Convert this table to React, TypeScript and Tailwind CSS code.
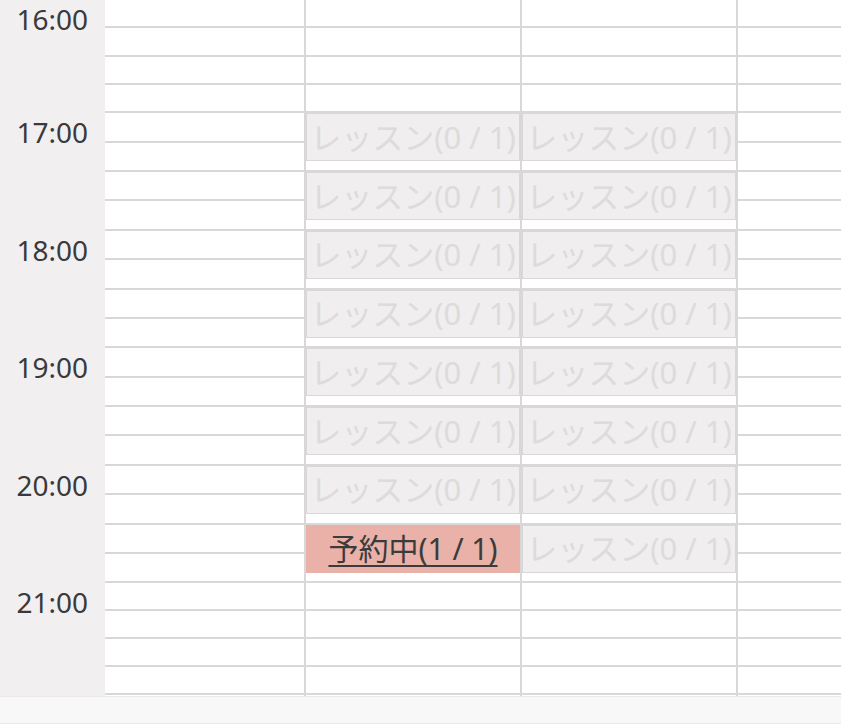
const FONT = { fontFamily: '"Noto Sans", "Noto Sans CJK JP", sans-serif' }

type Slot = { kind: 'lesson' | 'booked' }

const lessonCol: Slot[] = Array.from({ length: 8 }, () => ({ kind: 'lesson' as const }))
const bookedCol: Slot[] = [...lessonCol.slice(0, 7), { kind: 'booked' }]

const hours = [
  { label: '16:00', h: 'h-[113.33px]' },
  { label: '17:00', h: 'h-[117.5px]' },
  { label: '18:00', h: 'h-[117.5px]' },
  { label: '19:00', h: 'h-[117.5px]' },
  { label: '20:00', h: 'h-[117.5px]' },
  { label: '21:00', h: 'h-[112px]' },
]

function TopRows() {
  return (
    <>
      {[0, 1, 2, 3].map(i => (
        <div key={i} className="h-[28.33px] border-b-2 border-[#d9d7d8]" />
      ))}
    </>
  )
}

function BottomRows() {
  return (
    <>
      {[0, 1, 2, 3].map(i => (
        <div key={i} className="h-[28px] border-b-2 border-[#d9d7d8]" />
      ))}
    </>
  )
}

function MidRows() {
  return (
    <>
      {Array.from({ length: 16 }).map((_, i) => (
        <div key={i} className="h-[29.375px] border-b-2 border-[#d9d7d8]" />
      ))}
    </>
  )
}

function EventColumn({ slots }: { slots: Slot[] }) {
  return (
    <div className="w-[216px] flex flex-col border-l-2 border-[#d9d7d8]">
      <TopRows />
      {slots.map((s, i) => (
        <div key={i} className="h-[58.75px] border-b-2 border-[#d9d7d8] flex flex-col">
          {s.kind === 'lesson' ? (
            <div className="h-[48px] bg-[#f0eeef] border border-[#d9d7d8] flex items-center justify-center overflow-hidden whitespace-nowrap text-[31px] leading-none text-[#dddbdc]" style={FONT}>
              レッスン(0 / 1)
            </div>
          ) : (
            <div className="h-[48px] bg-[#e9b1a8] flex items-center justify-center overflow-hidden whitespace-nowrap text-[30px] leading-none text-[#3b3b3b]" style={FONT}>
              <span className="underline underline-offset-[5px] decoration-2">予約中(1 / 1)</span>
            </div>
          )}
        </div>
      ))}
      <BottomRows />
    </div>
  )
}

export default function App() {
  return (
    <div className="w-[841px] h-[724px] bg-[#f8f8f8] overflow-hidden flex flex-col">
      <div className="flex bg-white h-[696px] shrink-0">
        <div className="w-[105px] bg-[#f1eff0] flex flex-col" style={FONT}>
          {hours.map(h => (
            <div key={h.label} className={`${h.h} text-right pr-[17px] pt-[2px] text-[28px] leading-[34px] text-[#3a3a3a]`}>
              {h.label}
            </div>
          ))}
        </div>
        <div className="w-[199px] flex flex-col">
          <TopRows />
          <MidRows />
          <BottomRows />
        </div>
        <EventColumn slots={bookedCol} />
        <EventColumn slots={lessonCol} />
        <div className="flex-1 flex flex-col border-l-2 border-[#d9d7d8]">
          <TopRows />
          <MidRows />
          <BottomRows />
        </div>
      </div>
      <div className="flex-1 border-t border-[#e8e8e8] border-b" />
    </div>
  )
}
